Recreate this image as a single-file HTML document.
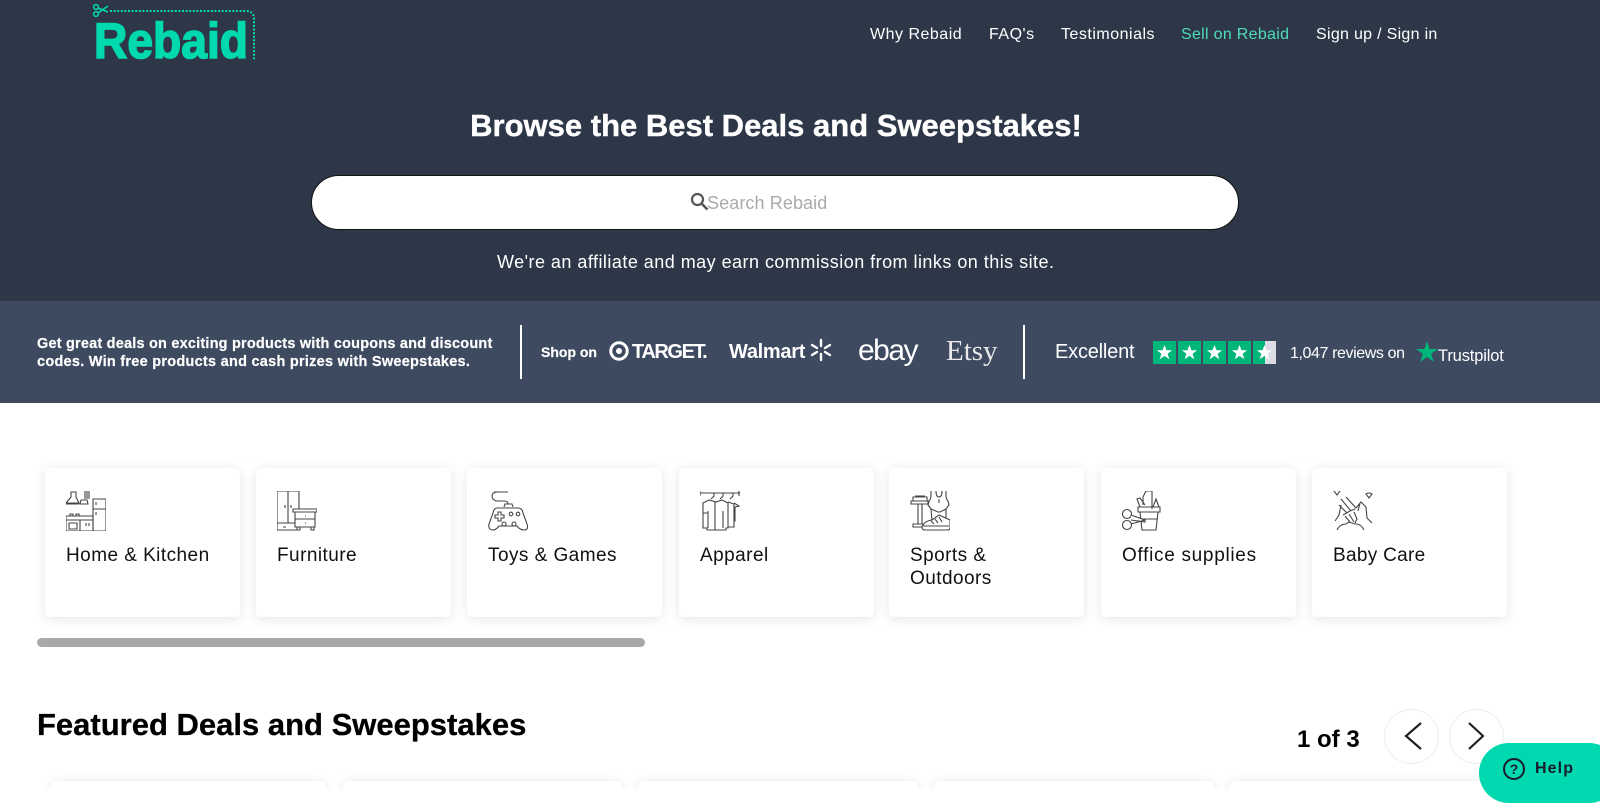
<!DOCTYPE html>
<html><head><meta charset="utf-8">
<style>
*{box-sizing:border-box;margin:0;padding:0}
html,body{width:1600px;height:789px;overflow:hidden;background:#fff;font-family:"Liberation Sans",sans-serif}
.t{position:absolute;white-space:nowrap;line-height:1}
#hd{position:absolute;left:0;top:0;width:1600px;height:301px;background:#2d3748}
#band{position:absolute;left:0;top:301px;width:1600px;height:102px;background:#3d4a60}
.nav{color:#fff;font-size:16px;top:27px;letter-spacing:.5px}
.card{position:absolute;top:468px;width:195px;height:149px;background:#fff;border-radius:5px;box-shadow:0 2px 12px rgba(0,0,0,.1)}
.card svg{position:absolute;left:21px;top:23px;width:40px;height:40px;fill:none;stroke:#444;stroke-width:1.1}
.lab{position:absolute;left:21px;top:76px;font-size:19px;line-height:23px;color:#111;letter-spacing:.45px}
.div{position:absolute;width:2px;background:#fff;top:325px;height:54px}
.circ{position:absolute;top:709px;width:55px;height:55px;border:1px solid #eee;border-radius:50%;background:#fff}
.bot{position:absolute;top:781px;height:40px;background:#fff;border-radius:6px;box-shadow:0 0 10px rgba(0,0,0,.09)}
</style></head><body>
<div id="hd"></div>
<svg style="position:absolute;left:88px;top:2px" width="172" height="62" viewBox="88 2 172 62">
<g fill="none" stroke="#00d9ae" stroke-width="1.5"><circle cx="96" cy="7" r="2.4"/><circle cx="96" cy="14" r="2.4"/><path d="M98 8l10 4M98 13l10-7"/></g>
<path d="M110 11H246Q254 11 254 19V60" fill="none" stroke="#00d9ae" stroke-width="2" stroke-dasharray="2 1.6"/>
<text x="94" y="58" font-family="Liberation Sans" font-weight="700" font-size="50" fill="#00d9ae" textLength="154" lengthAdjust="spacingAndGlyphs" stroke="#00d9ae" stroke-width="1.6">Rebaid</text>
</svg>
<div class="t nav" style="left:870px">Why Rebaid</div>
<div class="t nav" style="left:989px">FAQ's</div>
<div class="t nav" style="left:1061px">Testimonials</div>
<div class="t nav" style="left:1181px;color:#4fdcb8;letter-spacing:.3px">Sell on Rebaid</div>
<div class="t nav" style="left:1316px;letter-spacing:.3px">Sign up / Sign in</div>
<div class="t" style="left:401px;top:110px;width:750px;text-align:center;color:#fff;font-weight:700;font-size:31px;-webkit-text-stroke:.4px #fff">Browse the Best Deals and Sweepstakes!</div>
<div style="position:absolute;left:311px;top:175px;width:928px;height:55px;background:#fff;border-radius:28px;border:1px solid #111"></div>
<svg style="position:absolute;left:690px;top:192px" width="19" height="20" viewBox="0 0 19 20" fill="none" stroke="#555"><circle cx="7.5" cy="7.5" r="5.5" stroke-width="2.2"/><path d="M11.5 11.5l6 6" stroke-width="2.6"/></svg>
<div class="t" style="left:707px;top:194px;font-size:18px;color:#aaa;letter-spacing:.1px">Search Rebaid</div>
<div class="t" style="left:497px;top:253px;font-size:18px;color:#fff;letter-spacing:.47px">We're an affiliate and may earn commission from links on this site.</div>
<div id="band"></div>
<div class="t" style="left:37px;top:334.500px;font-size:14.500px;line-height:18.500px;font-weight:700;color:#fff;letter-spacing:.2px;-webkit-text-stroke:.2px #fff;white-space:nowrap;width:480px">Get great deals on exciting products with coupons and discount<br><span style="letter-spacing:.26px">codes. Win free products and cash prizes with Sweepstakes.</span></div>
<div class="div" style="left:520px"></div>
<div class="t" style="left:541px;top:345px;font-size:14px;font-weight:700;color:#fff;-webkit-text-stroke:.2px #fff">Shop on</div>
<svg style="position:absolute;left:608px;top:340px" width="22" height="22" viewBox="0 0 22 22"><circle cx="11" cy="11" r="8.2" fill="none" stroke="#fff" stroke-width="3"/><circle cx="11" cy="11" r="3" fill="#fff"/></svg>
<div class="t" style="left:632px;top:342px;font-size:20px;font-weight:700;color:#fff;letter-spacing:-1.4px">TARGET.</div>
<div class="t" style="left:729px;top:342px;font-size:20px;font-weight:700;color:#fff;letter-spacing:-.3px">Walmart</div>
<svg style="position:absolute;left:809px;top:338px" width="24" height="24" viewBox="0 0 24 24" stroke="#fff" stroke-width="2.4" stroke-linecap="round"><path d="M12 2v6M12 16v6M3 7l5 3M21 7l-5 3M3 17l5-3M21 17l-5-3"/></svg>
<div class="t" style="left:858px;top:336px;font-size:30px;color:#fff;letter-spacing:-1.500px">ebay</div>
<div class="t" style="left:946px;top:337px;font-size:29px;color:#e8e8e8;font-family:'Liberation Serif',serif">Etsy</div>
<div class="div" style="left:1023px"></div>
<div class="t" style="left:1055px;top:342px;font-size:20px;color:#fff;letter-spacing:-.2px">Excellent</div>
<svg style="position:absolute;left:1153px;top:341px" width="123" height="23" viewBox="0 0 123 23">
<defs><path id="s" d="M11.5 4l2 5.3h5.6l-4.5 3.4 1.7 5.6-4.8-3.4-4.8 3.4 1.7-5.6-4.500-3.400H9.500z" fill="#fff"/></defs>
<rect width="23" height="23" fill="#00b67a"/><rect x="25" width="23" height="23" fill="#00b67a"/><rect x="50" width="23" height="23" fill="#00b67a"/><rect x="75" width="23" height="23" fill="#00b67a"/><rect x="100" width="23" height="23" fill="#dcdce6"/><rect x="100" width="12" height="23" fill="#00b67a"/>
<use href="#s"/><use href="#s" x="25"/><use href="#s" x="50"/><use href="#s" x="75"/><use href="#s" x="100"/>
</svg>
<div class="t" style="left:1290px;top:346px;font-size:16px;color:#fff;letter-spacing:-.4px">1,047 reviews on</div>
<svg style="position:absolute;left:1416px;top:341px" width="22" height="21" viewBox="0 0 22 21"><path d="M11 0l2.600 8H22l-6.800 4.900 2.600 8L11 16l-6.800 4.900 2.600-8L0 8h8.400z" fill="#00b67a"/></svg>
<div class="t" style="left:1438px;top:348px;font-size:16.500px;color:#fff;letter-spacing:-.15px">Trustpilot</div>

<div class="card" style="left:45px"><svg viewBox="0 0 40 40"><path d="M0 12h13l-3-6V1H5v5L0 12zM0 12v1h13M19 0v8M21 0v8M23 0v8M15 9h6l1 4h-8z"/><path d="M27 8h13v32H27zM27 18h13M30 11v3M30 21v3"/><path d="M0 25h27v15H0zM0 29h27M14 29v11M3 32h8v6H3zM4 25v-2h3v2M10 25v-2h3v2M20 32v3M23 32v3M0 40h40"/></svg><div class="lab">Home &amp; Kitchen</div></div>
<div class="card" style="left:256px"><svg viewBox="0 0 40 40"><path d="M0 0h22v39H0zM11 0v32M0 32h22M8 14v3M14 14v3M6 36h3"/><path d="M16 18h24v3H16zM18 21h20v15H18zM18 28h20M28 25h1M28 32h1M20 36v3h3v-3M34 36v3h3v-3" fill="#fff"/></svg><div class="lab">Furniture</div></div>
<div class="card" style="left:467px"><svg viewBox="0 0 40 40"><path d="M6 1h14M20 1H10Q4 1 4 5t5 5h7q4 0 4 3"/><path d="M16 16l1-3h7l1 3M9 17q-3 0-4 5L1 33q-1 6 4 6 3 0 6-4h18q3 4 7 4 5 0 3-6l-4-11q-1-5-5-5z"/><path d="M10 21h3v3h3v3h-3v3h-3v-3H7v-3h3z"/><circle cx="23" cy="23" r="1.800"/><circle cx="30" cy="23" r="1.800"/><circle cx="16" cy="33" r="2"/><circle cx="26" cy="33" r="2"/></svg><div class="lab">Toys &amp; Games</div></div>
<div class="card" style="left:679px"><svg viewBox="0 0 40 40"><path d="M0 2h40M0 0v5M39 0v5M14 2v3l-3 3M23 2v3l-3 3M33 2v3l-3 3"/><path d="M9 9l-6 3v25h4v2h19v-2h2V12l-6-3-6 2zM15 11v28M8 20v17M23 20v17M3 22h5M15 17v2M15 24v2M15 31v2"/><path d="M28 11l6 2v23h-6M34 12l5 3-4 1v14h-1"/></svg><div class="lab">Apparel</div></div>
<div class="card" style="left:889px"><svg viewBox="0 0 40 40"><path d="M3 6h14v4H3zM1 10h17v3H1zM5 5h10M8 13v20M12 13v20M3 33h14v3H3z"/><path d="M21 0v4q0 4-2 6l-1 4 3 4 1 12M36 0v4q0 4 2 6l1 4-3 4v12M26 0q0 6 3 6t3-6M21 18l7 3h2l6-3M29 8v4"/><path d="M12 36q2-6 10-7l7-5 11 5v9q-1 1-3 1H15q-3 0-3-3zM21 30l3 3M25 28l3 4M29 26l3 5M13 35h26" fill="#fff"/></svg><div class="lab">Sports &amp;<br>Outdoors</div></div>
<div class="card" style="left:1101px"><svg viewBox="0 0 40 40"><path d="M21 14V6l3-6h6v18M18 16l-3-8 3-1 5 7M31 16l3-8 3 8"/><path d="M16 16h22v5H16zM18 21h18l-2 18H20zM19 28h16"/><circle cx="5" cy="23" r="4.500"/><circle cx="5" cy="34" r="4.500"/><path d="M9 24l14 5v2l-14-2M9 33l14-4" fill="#fff"/></svg><div class="lab" style="letter-spacing:.7px">Office supplies</div></div>
<div class="card" style="left:1312px"><svg viewBox="0 0 40 40"><path d="M1 0q3-2 6 0l-3 4zM33 3q3-2 6 0l-3 4zM8 8l10 12M6 14l8 8M13 6l10 11 5-6 5 5 1 11 5 5M27 12l-2 8M2 30l4-6 2-10M22 18l-5 2-7 4M12 25l5 6M16 23l5 8M21 21l3 7-2 4M4 39q3-6 9-6l3-2q5 2 7 2 5 0 8 6"/></svg><div class="lab" style="letter-spacing:.3px">Baby Care</div></div>

<div style="position:absolute;left:37px;top:638px;width:608px;height:9px;background:#a8a8a8;border-radius:5px"></div>
<div class="t" style="left:37px;top:709px;font-size:31px;font-weight:700;color:#000;-webkit-text-stroke:.3px #000">Featured Deals and Sweepstakes</div>
<div class="t" style="left:1297px;top:728px;font-size:24px;font-weight:700;color:#000">1 of 3</div>
<div class="circ" style="left:1384px"></div>
<div class="circ" style="left:1449px"></div>
<svg style="position:absolute;left:1384px;top:709px" width="120" height="55" viewBox="0 0 120 55" fill="none" stroke="#222" stroke-width="2.2"><path d="M37 14L22 27l15 13M85 14l14 13-14 13"/></svg>
<div style="position:absolute;left:0;top:771px;width:1600px;height:18px;overflow:hidden">
<div class="bot" style="left:51px;top:10px;width:275px"></div>
<div class="bot" style="left:343px;top:10px;width:279px"></div>
<div class="bot" style="left:638px;top:10px;width:280px"></div>
<div class="bot" style="left:934px;top:10px;width:280px"></div>
<div class="bot" style="left:1229px;top:10px;width:280px"></div>
</div>
<div style="position:absolute;left:1479px;top:743px;width:140px;height:60px;background:#00d9b0;border-radius:30px"></div>
<svg style="position:absolute;left:1502px;top:757px" width="24" height="24" viewBox="0 0 24 24"><circle cx="12" cy="12" r="10" fill="none" stroke="#1a1a2a" stroke-width="2"/><text x="12" y="17" text-anchor="middle" font-family="Liberation Sans" font-weight="700" font-size="14" fill="#1a1a2a">?</text></svg>
<div class="t" style="left:1535px;top:761px;font-size:16px;font-weight:700;color:#1a1a2a;letter-spacing:1.1px">Help</div>
</body></html>
